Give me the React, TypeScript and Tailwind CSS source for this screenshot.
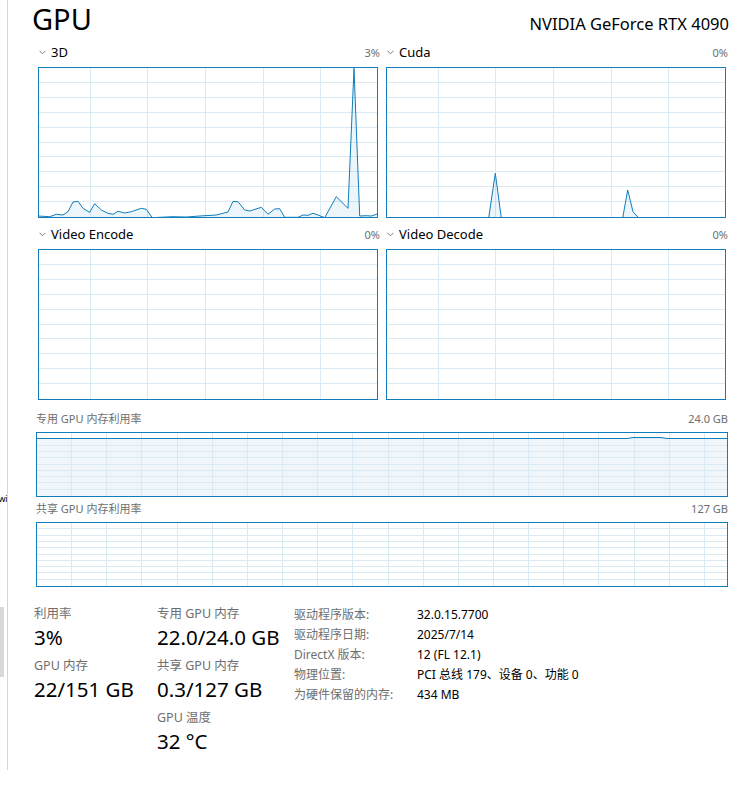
import React from "react";

const BLUE = "#117dbb";
const GRID = "#d9eaf4";

type Pt = [number, number];

const data3D: Pt[] = [
  [0, 149], [11.7, 149.7], [18.3, 147.3], [25, 148], [30, 144.7], [35, 135], [40, 134.3], [45, 141.3],
  [51.7, 145.3], [56.7, 136.7], [63.3, 143], [70, 146.3], [75, 147.3], [80, 144.3], [86.7, 146],
  [93.3, 144.7], [103.3, 141.3], [108.3, 142.3], [114.3, 150.7], [121.7, 150.3], [135, 149.7],
  [148.3, 150], [161.7, 149], [178.3, 148], [190, 145], [195, 134.3], [200, 134.7], [206.7, 143],
  [211.7, 144], [223.3, 140.3], [230, 147.3], [236.7, 142], [241.7, 141.7], [246.7, 150.3],
  [260, 150.3], [265, 148], [270, 148.3], [275, 146.3], [280, 148], [286.7, 150.7], [298.3, 129.7],
  [310, 141.3], [316, 1.3], [321.7, 149], [328.3, 148.7], [333.3, 149], [339.3, 147],
];

const dataCuda: Pt[] = [
  [0, 151], [102.7, 151], [109.3, 106.3], [115.3, 151], [236.7, 151], [241.7, 123], [247, 144.7],
  [252.7, 151], [340, 151],
];

function Chevron() {
  return (
    <svg width="7" height="5" viewBox="0 0 7 5" className="mr-[5px] shrink-0">
      <path d="M0.5 0.8 L3.5 3.8 L6.5 0.8" fill="none" stroke="#7a7a7a" strokeWidth="1" />
    </svg>
  );
}

function EngineChart({ title, value, points }: { title: string; value: string; points?: Pt[] }) {
  const w = 338;
  const h = 149;
  const vx = [51, 108, 166, 224, 281];
  const hy = Array.from({ length: 9 }, (_, i) => Math.round((i + 1) * 14.9) - 0.5);
  const pts = points ? points.map(([x, y]) => `${x - 1},${y - 1}`).join(" ") : "";
  return (
    <div className="flex flex-col">
      <div className="h-[22px] flex items-start justify-between leading-[15px]">
        <div className="flex items-center pl-[1px]">
          <Chevron />
          <span className="text-[13px] text-black">{title}</span>
        </div>
        <span className="text-[11px] text-[#6e6e6e] -mr-[2px]">{value}</span>
      </div>
      <div className="w-[340px] h-[151px] border border-[#117dbb] bg-white">
        <svg width={w} height={h} className="block">
          {vx.map((x) => (
            <line key={"v" + x} x1={x + 0.5} x2={x + 0.5} y1={0} y2={h} stroke={GRID} strokeWidth="1" />
          ))}
          {hy.map((y) => (
            <line key={"h" + y} x1={0} x2={w} y1={y} y2={y} stroke={GRID} strokeWidth="1" />
          ))}
          {points && (
            <>
              <polygon points={`-1,150 ${pts} 340,150`} fill={BLUE} fillOpacity="0.08" />
              <polyline points={pts} fill="none" stroke={BLUE} strokeWidth="1" strokeLinejoin="round" />
            </>
          )}
        </svg>
      </div>
    </div>
  );
}

function MemChart({ title, value, level }: { title: string; value: string; level?: number }) {
  const w = 690;
  const h = 63;
  const vx = Array.from({ length: 19 }, (_, i) => Math.round((i + 1) * 35.15) - 0.5);
  const hy = Array.from({ length: 9 }, (_, i) => Math.round((i + 1) * 6.3) - 0.5);
  return (
    <div className="w-[692px] flex flex-col">
      <div className="h-[22px] flex items-start justify-between leading-[18px]">
        <span className="text-[11px] text-[#6e6e6e]">{title}</span>
        <span className="text-[11px] text-[#6e6e6e]">{value}</span>
      </div>
      <div className="w-[692px] h-[65px] border border-[#117dbb] bg-white">
        <svg width={w} height={h} className="block">
          {level !== undefined && (
            <rect x={0} y={level} width={w} height={h - level} fill="#f1f6fa" />
          )}
          {vx.map((x) => (
            <line key={"v" + x} x1={x} x2={x} y1={0} y2={h} stroke={GRID} strokeWidth="1" />
          ))}
          {hy.map((y) => (
            <line key={"h" + y} x1={0} x2={w} y1={y} y2={y} stroke={GRID} strokeWidth="1" />
          ))}
          {level !== undefined && (
            <polyline
              points={`0,${level + 0.5} 590,${level + 0.5} 596,${level - 0.5} 624,${level - 0.5} 630,${level + 0.5} ${w},${level + 0.5}`}
              fill="none"
              stroke={BLUE}
              strokeWidth="1"
            />
          )}
        </svg>
      </div>
    </div>
  );
}

function Stat({ label, value }: { label: string; value: string }) {
  return (
    <div className="flex flex-col">
      <div className="h-[18px] leading-[18px] text-[12.5px] text-[#6e6e6e] whitespace-nowrap">{label}</div>
      <div className="h-[28px] leading-[28px] text-[20.5px] text-black whitespace-nowrap">{value}</div>
    </div>
  );
}

const info: [string, string][] = [
  ["驱动程序版本:", "32.0.15.7700"],
  ["驱动程序日期:", "2025/7/14"],
  ["DirectX 版本:", "12 (FL 12.1)"],
  ["物理位置:", "PCI 总线 179、设备 0、功能 0"],
  ["为硬件保留的内存:", "434 MB"],
];

export default function App() {
  return (
    <div className="w-[754px] h-[786px] bg-white overflow-hidden flex font-['Noto_Sans','Noto_Sans_CJK_SC',sans-serif]">
      <div className="w-[7px] h-[770px] shrink-0 flex flex-col">
        <div className="h-[491px]" />
        <div className="h-[16px] leading-[16px] text-[9px] tracking-[-0.5px] text-black whitespace-nowrap flex justify-end">wi</div>
        <div className="h-[100px]" />
        <div className="w-[4px] h-[70px] bg-[#d9d9d9]" />
      </div>
      <div className="w-[1px] h-[770px] bg-[#d6d6d6] shrink-0" />
      <div className="flex-1 flex flex-col">
        <div className="h-[45px] flex items-baseline justify-between pl-[24px] pr-[25px] pt-[1px]">
          <span className="text-[29px] leading-[36px] text-black">GPU</span>
          <span className="text-[16.5px] text-black">NVIDIA GeForce RTX 4090</span>
        </div>
        <div className="ml-[30px] grid grid-cols-[340px_340px] gap-x-[8px] gap-y-[9px]">
          <EngineChart title="3D" value="3%" points={data3D} />
          <EngineChart title="Cuda" value="0%" points={dataCuda} />
          <EngineChart title="Video Encode" value="0%" />
          <EngineChart title="Video Decode" value="0%" />
        </div>
        <div className="ml-[28px] mt-[10px] flex flex-col gap-[3px]">
          <MemChart title="专用 GPU 内存利用率" value="24.0 GB" level={5} />
          <MemChart title="共享 GPU 内存利用率" value="127 GB" />
        </div>
        <div className="ml-[26px] mt-[18px] flex items-start">
          <div className="w-[123px] flex flex-col gap-[6px]">
            <Stat label="利用率" value="3%" />
            <Stat label="GPU 内存" value="22/151 GB" />
          </div>
          <div className="w-[137px] flex flex-col gap-[6px]">
            <Stat label="专用 GPU 内存" value="22.0/24.0 GB" />
            <Stat label="共享 GPU 内存" value="0.3/127 GB" />
            <Stat label="GPU 温度" value="32 °C" />
          </div>
          <div className="grid grid-cols-[123px_auto] content-start">
            {info.map(([k, v]) => (
              <React.Fragment key={k}>
                <div className="h-[20px] leading-[20px] text-[12px] text-[#6e6e6e] whitespace-nowrap">{k}</div>
                <div className="h-[20px] leading-[20px] text-[12px] text-black whitespace-nowrap">{v}</div>
              </React.Fragment>
            ))}
          </div>
        </div>
      </div>
    </div>
  );
}
